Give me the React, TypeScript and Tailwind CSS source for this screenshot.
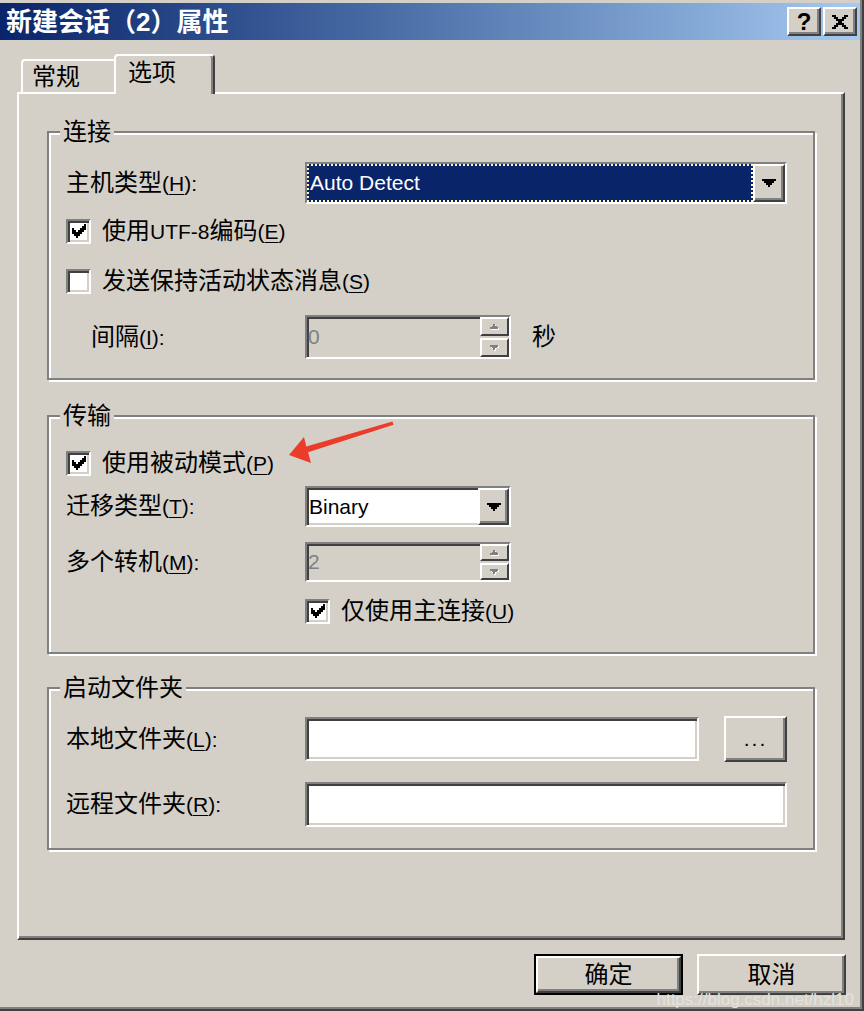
import React from "react";

const RAISED =
  "border-2 border-t-white border-l-white border-r-[#404040] border-b-[#404040] shadow-[inset_-2px_-2px_0_#808080]";
const SUNKEN =
  "border-2 border-t-[#808080] border-l-[#808080] border-r-white border-b-white shadow-[inset_2px_2px_0_#404040,inset_-2px_-2px_0_#d4d0c8]";

function C({ children }: { children: React.ReactNode }) {
  return <span className="text-[24px]">{children}</span>;
}
function K({ children }: { children: React.ReactNode }) {
  return <u className="underline underline-offset-[3px] decoration-1">{children}</u>;
}

function Check({ checked }: { checked?: boolean }) {
  return (
    <span
      className={`w-[25px] h-[25px] shrink-0 bg-white flex items-center justify-center ${SUNKEN}`}
    >
      {checked && (
        <svg width="14" height="14" viewBox="0 0 7 7" shapeRendering="crispEdges">
          <path
            d="M0 2h1v3H0zM1 3h1v3H1zM2 4h1v3H2zM3 3h1v3H3zM4 2h1v3H4zM5 1h1v3H5zM6 0h1v3H6z"
            fill="#000"
          />
        </svg>
      )}
    </span>
  );
}

function DropArrow() {
  return (
    <svg width="14" height="8" viewBox="0 0 7 4" shapeRendering="crispEdges">
      <path d="M0 0h7v1H0zM1 1h5v1H1zM2 2h3v1H2zM3 3h1v1H3z" fill="#000" />
    </svg>
  );
}

function SpinArrow({ up }: { up?: boolean }) {
  const d = up
    ? "M2 0h1v1H2zM1 1h3v1H1zM0 2h5v1H0z"
    : "M0 0h5v1H0zM1 1h3v1H1zM2 2h1v1H2z";
  return (
    <svg width="9" height="6" viewBox="0 0 5.5 3.5" shapeRendering="crispEdges">
      <path d={d} fill="#ffffff" transform="translate(0.5 0.5)" />
      <path d={d} fill="#808080" />
    </svg>
  );
}

function DropBtn({ w }: { w: string }) {
  return (
    <div className={`${w} h-full shrink-0 bg-[#d4d0c8] flex items-center justify-center ${RAISED}`}>
      <DropArrow />
    </div>
  );
}

function Spin({ value, h }: { value: string; h: string }) {
  return (
    <div className={`w-[206px] ${h} shrink-0 flex bg-[#d4d0c8] ${SUNKEN}`}>
      <span className="flex-1 flex items-center pl-[1px] text-[#808080]">{value}</span>
      <div className="w-[29px] flex flex-col gap-[2px]">
        <div className="flex-1 flex items-center justify-center border-2 border-t-white border-l-white border-r-[#404040] border-b-[#404040]">
          <SpinArrow up />
        </div>
        <div className="flex-1 flex items-center justify-center border-2 border-t-white border-l-white border-r-[#404040] border-b-[#404040]">
          <SpinArrow />
        </div>
      </div>
    </div>
  );
}

function Group({
  title,
  className,
  children,
}: {
  title: string;
  className: string;
  children: React.ReactNode;
}) {
  return (
    <fieldset
      className={`w-[768px] border-2 border-[#808080] shadow-[inset_2px_2px_0_#ffffff,2px_2px_0_#ffffff] pl-[11px] ${className}`}
    >
      <legend className="px-[3px] h-[24px] leading-[24px] bg-[#d4d0c8]">
        <C>{title}</C>
      </legend>
      <div className="ml-[6px]">{children}</div>
    </fieldset>
  );
}

function TitleBtn({ children }: { children: React.ReactNode }) {
  return (
    <div className={`w-[34px] h-[29px] bg-[#d4d0c8] flex items-center justify-center ${RAISED}`}>
      {children}
    </div>
  );
}

export default function App() {
  return (
    <div className="relative w-[864px] h-[1011px] overflow-hidden bg-[#d4d0c8] text-black font-['Liberation_Sans','Noto_Sans_CJK_SC',sans-serif] text-[21px] leading-[24px] border-r-2 border-b-2 border-[#404040]">
      <div className="h-full border-r-2 border-b-2 border-[#808080] pt-[3px]">
        {/* title bar */}
        <div className="h-[37px] flex items-center justify-between pl-[6px] pr-[3px] bg-linear-to-r from-[#0a246a] to-[#a6caf0]">
          <span className="text-white font-bold text-[26px] leading-[28px]">新建会话（2）属性</span>
          <div className="flex gap-[2px]">
            <TitleBtn>
              <span className="font-bold text-[24px] leading-none">?</span>
            </TitleBtn>
            <TitleBtn>
              <svg width="16" height="14" viewBox="0 0 8 7" shapeRendering="crispEdges">
                <path
                  d="M0 0h2v1H0zM6 0h2v1H6zM1 1h2v1H1zM5 1h2v1H5zM2 2h4v1H2zM3 3h2v1H3zM2 4h4v1H2zM1 5h2v1H1zM5 5h2v1H5zM0 6h2v1H0zM6 6h2v1H6z"
                  fill="#000"
                />
              </svg>
            </TitleBtn>
          </div>
        </div>

        {/* tabs */}
        <div className="relative z-10 mt-[14px] ml-[21px] flex items-start h-[40px] -mb-[2px]">
          <div className="mt-[5px] w-[93px] h-[33px] border-l-2 border-t-2 border-white rounded-tl-[4px] pl-[9px] pt-[4px]">
            <C>常规</C>
          </div>
          <div className="w-[101px] h-[40px] bg-[#d4d0c8] border-l-2 border-t-2 border-r-2 border-l-white border-t-white border-r-[#404040] rounded-t-[4px] pl-[12px] pt-[5px] shadow-[inset_-2px_0_0_#808080]">
            <C>选项</C>
          </div>
        </div>

        {/* panel */}
        <div className="ml-[17px] w-[828px] h-[848px] border-2 border-t-white border-l-white border-r-[#404040] border-b-[#404040] shadow-[inset_-2px_-2px_0_#808080] pt-[26px] pl-[28px]">
          <Group title="连接" className="pb-[19px]">
            <div className="pt-[18px]">
              <div className="flex items-center h-[42px]">
                <span className="w-[239px] shrink-0">
                  <C>主机类型</C>(<K>H</K>):
                </span>
                <div className={`w-[482px] h-[42px] flex bg-white ${SUNKEN}`}>
                  <div className="flex-1 bg-[#0a246a] text-white flex items-center pl-[3px] outline-2 outline-dotted outline-[#fff4c4] outline-offset-[-2px]">
                    Auto Detect
                  </div>
                  <DropBtn w="w-[32px]" />
                </div>
              </div>
              <div className="mt-[14px] flex items-center h-[26px]">
                <Check checked />
                <span className="ml-[11px]">
                  <C>使用</C>UTF-8<C>编码</C>(<K>E</K>)
                </span>
              </div>
              <div className="mt-[24px] flex items-center h-[26px]">
                <Check />
                <span className="ml-[11px]">
                  <C>发送保持活动状态消息</C>(<K>S</K>)
                </span>
              </div>
              <div className="mt-[21px] flex items-center h-[44px]">
                <span className="w-[239px] shrink-0 pl-[25px]">
                  <C>间隔</C>(<K>I</K>):
                </span>
                <Spin value="0" h="h-[44px]" />
                <span className="ml-[21px]">
                  <C>秒</C>
                </span>
              </div>
            </div>
          </Group>

          <Group title="传输" className="mt-[24px] pb-[28px]">
            <div className="pt-[22px]">
              <div className="flex items-center h-[26px]">
                <Check checked />
                <span className="ml-[11px]">
                  <C>使用被动模式</C>(<K>P</K>)
                </span>
              </div>
              <div className="mt-[10px] flex items-center h-[41px]">
                <span className="w-[239px] shrink-0">
                  <C>迁移类型</C>(<K>T</K>):
                </span>
                <div className={`w-[206px] h-[41px] flex bg-white ${SUNKEN}`}>
                  <div className="flex-1 flex items-center pl-[2px]">Binary</div>
                  <DropBtn w="w-[31px]" />
                </div>
              </div>
              <div className="mt-[15px] flex items-center h-[40px]">
                <span className="w-[239px] shrink-0">
                  <C>多个转机</C>(<K>M</K>):
                </span>
                <Spin value="2" h="h-[40px]" />
              </div>
              <div className="mt-[16px] flex items-center h-[26px] pl-[239px]">
                <Check checked />
                <span className="ml-[11px]">
                  <C>仅使用主连接</C>(<K>U</K>)
                </span>
              </div>
            </div>
          </Group>

          <Group title="启动文件夹" className="mt-[22px] pb-[21px]">
            <div className="pt-[16px]">
              <div className="flex items-center h-[46px]">
                <span className="w-[239px] shrink-0">
                  <C>本地文件夹</C>(<K>L</K>):
                </span>
                <div className={`w-[394px] h-[44px] bg-white ${SUNKEN}`} />
                <div
                  className={`ml-[25px] w-[63px] h-[46px] flex items-center justify-center tracking-[2px] ${RAISED}`}
                >
                  ...
                </div>
              </div>
              <div className="mt-[20px] flex items-center h-[45px]">
                <span className="w-[239px] shrink-0">
                  <C>远程文件夹</C>(<K>R</K>):
                </span>
                <div className={`w-[482px] h-[45px] bg-white ${SUNKEN}`} />
              </div>
            </div>
          </Group>
        </div>

        {/* buttons */}
        <div className="mt-[14px] flex justify-end gap-[14px] pr-[14px]">
          <div className="w-[149px] h-[41px] border-2 border-black">
            <div className={`w-full h-full flex items-center justify-center ${RAISED}`}>
              <C>确定</C>
            </div>
          </div>
          <div className={`w-[149px] h-[41px] flex items-center justify-center ${RAISED}`}>
            <C>取消</C>
          </div>
        </div>
      </div>

      {/* red annotation arrow */}
      <svg
        className="absolute left-0 top-0 pointer-events-none"
        width="864"
        height="1011"
        viewBox="0 0 864 1011"
      >
        <polygon
          points="289,455 304,437 306.3,446.5 392.5,421.5 393.5,424.8 308.1,452.3 311,463"
          fill="#eb3b2b"
        />
      </svg>

      {/* watermark */}
      <div className="absolute right-[8px] top-[992px] text-[17px] leading-[16px] text-[#e4e2dc] pointer-events-none">
        https://blog.csdn.net/hzl10
      </div>
    </div>
  );
}
